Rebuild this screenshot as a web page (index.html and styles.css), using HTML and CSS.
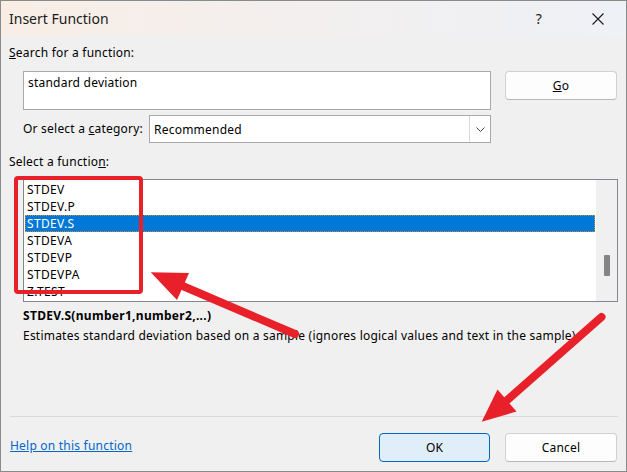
FILE: index.html
```html
<!DOCTYPE html>
<html>
<head>
<meta charset="utf-8">
<title>Insert Function</title>
<link rel="stylesheet" href="styles.css">
</head>
<body>
<div class="window">
  <div class="titlebar">
    <span class="title">Insert Function</span>
    <span class="help">?</span>
    <svg class="close" width="12" height="12" viewBox="0 0 12 12"><path d="M0.5 0.5 L11.5 11.5 M11.5 0.5 L0.5 11.5" stroke="#1a1a1a" stroke-width="1.1" fill="none"/></svg>
  </div>
  <div class="content">
    <div class="label l-search"><u>S</u>earch for a function:</div>
    <div class="row row-search">
      <div class="textbox">standard deviation</div>
      <div class="btn">
        <span><u>G</u>o</span>
      </div>
    </div>
    <div class="row row-cat">
      <div class="cat">
        <span class="label">Or select a <u>c</u>ategory:</span>
        <div class="select">
          <span class="select-text">Recommended</span>
          <span class="drop">
            <svg width="9" height="5" viewBox="0 0 9 5"><path d="M0.5 0.5 L4.5 4.5 L8.5 0.5" stroke="#444" stroke-width="1" fill="none"/></svg>
          </span>
        </div>
      </div>
    </div>
    <div class="label l-func">Select a functio<u>n</u>:</div>
    <div class="listbox">
      <div class="items">
        <div class="item">STDEV</div>
        <div class="item">STDEV.P</div>
        <div class="item selected">STDEV.S</div>
        <div class="item">STDEVA</div>
        <div class="item">STDEVP</div>
        <div class="item">STDEVPA</div>
        <div class="item">Z.TEST</div>
      </div>
      <div class="scrollbar"><div class="thumb"></div></div>
    </div>
    <div class="signature">STDEV.S(number1,number2,...)</div>
    <div class="desc">Estimates standard deviation based on a sample (ignores logical values and text in the sample).</div>
    <div class="spacer"></div>
    <div class="separator"></div>
    <div class="footer">
      <a class="link" href="#">Help on this function</a>
      <div class="buttons">
        <div class="btn btn-ok">OK</div>
        <div class="btn">Cancel</div>
      </div>
    </div>
  </div>
  <svg class="annot" width="627" height="472" viewBox="0 0 627 472">
    <rect x="16" y="178" width="125" height="114" rx="2" ry="2" fill="none" stroke="#e8202a" stroke-width="4"/>
    <line x1="178" y1="284" x2="295" y2="334" stroke="#e8202a" stroke-width="8" stroke-linecap="round"/>
    <polygon points="150.7,272.3 189,273 177,300" fill="#e8202a"/>
    <line x1="505" y1="402" x2="601.5" y2="317" stroke="#e8202a" stroke-width="8" stroke-linecap="round"/>
    <polygon points="481.7,421.7 497.5,389.5 516.5,411.5" fill="#e8202a"/>
  </svg>
</div>
</body>
</html>
```

FILE: styles.css
```css
* { box-sizing: border-box; }
html, body { margin: 0; padding: 0; }
body {
  font-family: "Noto Sans", "Open Sans", sans-serif;
  font-size: 12px;
  letter-spacing: 0.22px;
  color: #000;
  background: #ffffff;
}
.window {
  position: relative;
  width: 627px;
  height: 472px;
  border: 1px solid #8a8a8a;
  background: #f0f0f0;
  display: flex;
  flex-direction: column;
  overflow: hidden;
}
.titlebar {
  height: 35px;
  flex: none;
  display: flex;
  align-items: center;
  padding-left: 8px;
  padding-right: 22px;
  background: linear-gradient(90deg, #f8eee6 0%, #f3efee 45%, #eef1f6 100%);
}
.title {
  font-size: 14px;
  letter-spacing: 0;
  flex: 1;
  color: #1a1a1a;
  line-height: 20px;
}
.help {
  font-size: 14px;
  line-height: 20px;
  color: #1a1a1a;
  margin-right: 50px;
}
.close { display: block; }
.content {
  flex: 1;
  display: flex;
  flex-direction: column;
  padding: 0 8px 9px 8px;
}
.label { line-height: 16px; white-space: nowrap; }
.l-search { margin-top: 9px; height: 16px; }
.row { display: flex; }
.row-search {
  margin-top: 10px;
  margin-left: 14px;
  align-items: flex-start;
}
.textbox {
  width: 468px;
  height: 39px;
  background: #fff;
  border: 1px solid #a9a9a9;
  padding: 3px 4px;
  line-height: 16px;
}
.btn {
  width: 112px;
  height: 29px;
  margin-left: 14px;
  background: #fdfdfd;
  border: 1px solid #d0d0d0;
  border-bottom-color: #b8b8b8;
  border-radius: 4px;
  display: flex;
  align-items: center;
  justify-content: center;
  line-height: 16px;
}
.row-cat { margin-top: 5px; margin-left: 14px; }
.cat {
  width: 468px;
  display: flex;
  align-items: center;
  justify-content: space-between;
}
.select {
  width: 342px;
  height: 28px;
  background: #fff;
  border: 1px solid #a9a9a9;
  display: flex;
  align-items: stretch;
}
.select-text {
  flex: 1;
  padding-left: 4px;
  display: flex;
  align-items: center;
}
.drop {
  width: 21px;
  margin: 0;
  border-left: 1px solid #d9d9d9;
  display: flex;
  align-items: center;
  justify-content: center;
  padding-top: 1px;
}
.drop svg { display: block; }
.l-func { margin-top: 11px; height: 16px; }
.listbox {
  margin-top: 9px;
  margin-left: 14px;
  height: 123px;
  border: 1px solid #82878f;
  background: #fff;
  display: flex;
}
.items {
  flex: 1;
  padding-top: 1px;
  overflow: hidden;
}
.item {
  height: 17px;
  line-height: 17px;
  margin: 0 1px;
  padding-left: 2px;
  white-space: nowrap;
  letter-spacing: 0.35px;
}
.item.selected {
  background: #0078d7;
  color: #fff;
  outline: 1px dotted #c98a3a;
  outline-offset: -1px;
}
.scrollbar {
  width: 21px;
  background: #f0f0f0;
  position: relative;
  display: flex;
  justify-content: center;
  padding-top: 75px;
}
.thumb {
  width: 6px;
  height: 21px;
  background: #858585;
  border-radius: 1px;
}
.signature {
  margin-top: 6px;
  margin-left: 14px;
  font-weight: bold;
  letter-spacing: 0.3px;
  line-height: 16px;
}
.desc {
  margin-top: 4px;
  margin-left: 14px;
  line-height: 16px;
  white-space: nowrap;
}
.spacer { flex: 1; }
.separator {
  height: 1px;
  background: #d9d9d9;
  margin-left: 1px;
}
.footer {
  margin-top: 16px;
  display: flex;
  align-items: center;
  justify-content: space-between;
}
.link {
  color: #0066cc;
  text-decoration: underline;
  line-height: 16px;
  margin-bottom: 4px;
  margin-left: 1px;
}
.buttons { display: flex; margin-right: 1px; }
.buttons .btn { height: 29px; }
.btn-ok {
  width: 111px;
  background: #e0eef9;
  border: 1px solid #0067c0;
  margin-right: 1px;
}
.annot {
  position: absolute;
  left: -1px;
  top: -1px;
  pointer-events: none;
}
```
